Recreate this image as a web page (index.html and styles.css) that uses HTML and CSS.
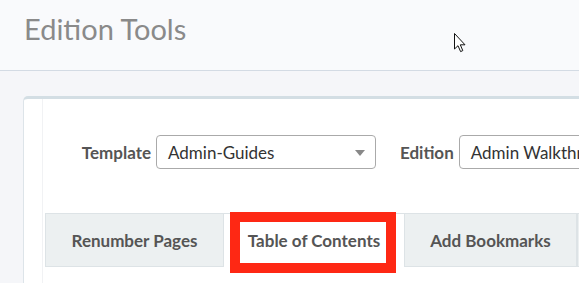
FILE: index.html
```html
<!DOCTYPE html>
<html>
<head>
<meta charset="utf-8">
<link rel="stylesheet" href="styles.css">
</head>
<body>
<header class="page-header">
  <h1 class="page-title">Edition Tools</h1>
  <svg class="cursor" width="13" height="20" viewBox="0 0 13 20"><path d="M0.5 0.5 L0.5 16 L4 12.7 L6.6 18.6 L8.8 17.6 L6.3 11.8 L11 11.8 Z" fill="#fff" stroke="#111" stroke-width="1" stroke-linejoin="miter"/></svg>
</header>
<main class="content">
  <section class="panel">
    <div class="panel-body">
      <div class="form-row">
        <label class="field-label label-template">Template</label>
        <div class="select select-template">
          <span class="select-value">Admin-Guides</span>
          <span class="select-arrow"></span>
        </div>
        <label class="field-label label-edition">Edition</label>
        <div class="select select-edition">
          <span class="select-value">Admin Walkthrough</span>
        </div>
      </div>
      <div class="tabs">
        <div class="tab tab-renumber">Renumber Pages</div>
        <div class="tab tab-active tab-toc">Table of Contents</div>
        <div class="tab tab-bookmarks">Add Bookmarks</div>
        <div class="tab tab-more"></div>
        <div class="highlight"></div>
      </div>
    </div>
  </section>
</main>
</body>
</html>
```

FILE: styles.css
```css
html, body {
  margin: 0;
  padding: 0;
}
body {
  width: 579px;
  height: 283px;
  overflow: hidden;
  background: #f5f6f9;
  font-family: "Lato", "Liberation Sans", sans-serif;
}
.page-header {
  position: relative;
  height: 70px;
  background: #f9fafc;
  border-bottom: 1px solid #d3dbe4;
}
.page-title {
  margin: 0;
  padding: 12px 0 0 24px;
  font-size: 29px;
  line-height: 34px;
  font-weight: 400;
  color: #8a8a8a;
}
.cursor {
  position: absolute;
  left: 454px;
  top: 33px;
}
.content {
  padding: 25px 0 0 23px;
}
.panel {
  background: #fff;
  border-top: 3px solid #d3dee4;
  border-left: 1px solid #dde4e9;
  border-top-left-radius: 5px;
  height: 200px;
  overflow: hidden;
}
.panel-body {
  margin-left: 18px;
  border-left: 1px solid #f1f2f4;
  padding: 36px 0 0 2px;
  height: 100%;
  box-sizing: border-box;
}
.form-row {
  display: flex;
  align-items: center;
  white-space: nowrap;
}
.form-row > * {
  flex: none;
}
.field-label {
  font-size: 17px;
  font-weight: 700;
  color: #555;
}
.label-template {
  width: 106px;
  text-align: right;
  margin-right: 5px;
}
.label-edition {
  margin-left: 24px;
  margin-right: 5px;
}
.select {
  position: relative;
  height: 34px;
  border: 1px solid #aaa;
  border-radius: 4px;
  box-sizing: border-box;
  display: flex;
  align-items: center;
  padding-left: 11px;
  font-size: 17px;
  color: #333;
}
.select-template {
  width: 220px;
}
.select-edition {
  width: 200px;
}
.select-arrow {
  position: absolute;
  right: 10px;
  top: 14px;
  width: 0;
  height: 0;
  border-left: 5px solid transparent;
  border-right: 5px solid transparent;
  border-top: 6px solid #888;
}
.tabs {
  position: relative;
  display: flex;
  margin-top: 44px;
  white-space: nowrap;
}
.tab {
  height: 54px;
  box-sizing: border-box;
  display: flex;
  align-items: center;
  justify-content: center;
  background: #ecf0f1;
  border: 1px solid #dde3e6;
  font-size: 17px;
  font-weight: 700;
  color: #555;
  flex: none;
}
.tab-renumber {
  width: 179px;
}
.tab-toc {
  width: 180px;
}
.tab-bookmarks {
  width: 173px;
}
.tab-more {
  width: 120px;
}
.tab-active {
  background: #fff;
  border-bottom-color: #fff;
  border-left: none;
  border-right: none;
}
.highlight {
  position: absolute;
  left: 185px;
  top: -1px;
  width: 166px;
  height: 61px;
  box-sizing: border-box;
  border: 10px solid #fe2814;
}
```
